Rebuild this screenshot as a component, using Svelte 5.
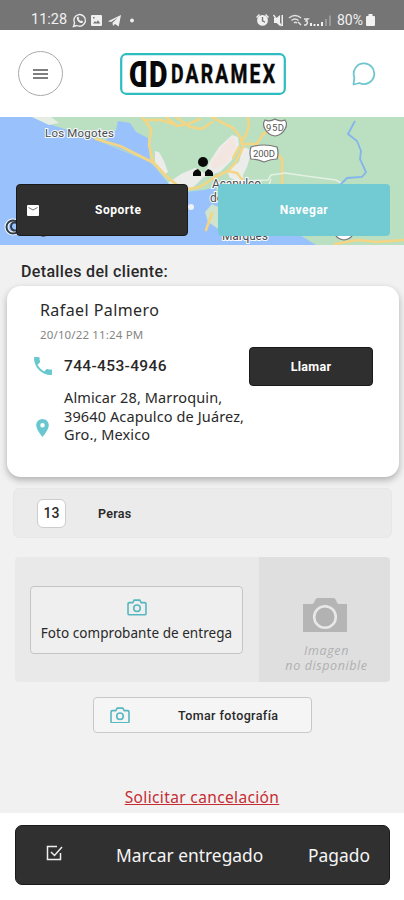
<script lang="ts">
    let customer = {
        name: 'Rafael Palmero',
        date: '20/10/22 11:24 PM',
        phone: '744-453-4946',
        address: ['Almicar 28, Marroquin,', '39640 Acapulco de Juárez,', 'Gro., Mexico'],
    };

    let items = [{ quantity: 13, name: 'Peras' }];
</script>

{#snippet camera(width: number)}
    <svg class="camera" {width} height={width * 0.84} viewBox="0 0 20 17" fill="none" stroke="#55b7bf" stroke-width="1.6">
        <path d="M2.2 3.7h3.5l1.5-2.6h5.6l1.5 2.6h3.5q1.3 0 1.3 1.3v9.6q0 1.4-1.3 1.4H2.2Q.9 16 .9 14.600V5q0-1.300 1.300-1.300z" />
        <circle cx="10" cy="9.300" r="3.300" />
    </svg>
{/snippet}

<div class="screen">
    <div class="status-bar">
        <span class="time">11:28</span>
        <svg width="64" height="18" viewBox="0 0 64 18" fill="#f0f0f0">
            <path d="M1.500 15.500l1-3.400a5.800 5.800 0 1 1 2.400 2.400z" fill="none" stroke="#f0f0f0" stroke-width="1.400" />
            <path d="M5 6.200l1.200-.7 1 1.700-.6 1 2 1.900 1-.5 1.500 1-.6 1.300c-3 .9-6.400-2.900-5.500-5.700z" />
            <path fill-rule="evenodd" d="M20 4h9q1 0 1 1v9q0 1-1 1h-9q-1 0-1-1V5q0-1 1-1zM21 12.500h7.300l-2.400-3.200-1.700 2.100-1.200-1.300zM21 6v1.500h1.500V6z" />
            <path d="M36 10.200L49 4l-2.300 11.500-3.700-2.600-2 2-.5-3.200L46 6.500l-7 4.600z" />
            <circle cx="60" cy="9.500" r="1.900" />
        </svg>
        <svg class="system" width="77" height="18" viewBox="0 0 77 18" fill="#f0f0f0">
            <path d="M1 6l3-3 1 1-3 3zM11 3l3 3-1 1-3-3z" />
            <path fill-rule="evenodd" d="M7.500 4a5.400 5.400 0 1 1 0 10.800A5.400 5.400 0 0 1 7.500 4zM6.800 6v4.200l3 1.600.6-1.100-2.200-1.200V6z" />
            <path d="M19 7h2.500L25 4v11l-3.500-3H19zM26.500 4H28v11h-1.500z" />
            <path d="M18.500 4l8 11" stroke="#f0f0f0" stroke-width="1.300" />
            <g fill="none" stroke="#e2e2e2" stroke-width="1.500">
                <path d="M34 7q6-5 12 0M36.500 9.500q3.500-3 7 0M39 12q1.500-1.500 3 0" />
                <path d="M43 11l3 3M49 8h4l-2 2q3 1 0 4h-2" />
            </g>
            <path d="M55 12h2v3h-2zM58.500 13h2v2h-2zM62 13h2v2h-2zM66 11h2v4h-2z" />
            <path d="M70 8h2v7h-2zM74 4.500h2V15h-2z" fill="#9a9a9a" />
        </svg>
        <span class="battery">80%</span>
        <svg width="9" height="14" viewBox="0 0 9 14" fill="#f2f2f2"><path d="M2.500 1h4v2H8q1 0 1 1v8q0 1-1 1H1q-1 0-1-1V4q0-1 1-1h1.500z" /></svg>
    </div>

    <header>
        <button class="menu" aria-label="Menú">
            <svg width="15" height="12" viewBox="0 0 15 12" stroke="#555" stroke-width="1.500"><path d="M0 2h15M0 6h15M0 10h15" /></svg>
        </button>
        <svg class="logo" width="166" height="42" viewBox="0 0 166 42">
            <rect x="1.200" y="1.200" width="163.600" height="39.600" rx="5" fill="#fff" stroke="#2dbcc0" stroke-width="2.200" />
            <g fill="#080808" stroke="#080808" font-family="Roboto, sans-serif">
                <text transform="translate(27.500 33.500) scale(-1 1)" font-size="36" font-weight="900" stroke="none" textLength="18.500" lengthAdjust="spacingAndGlyphs">D</text>
                <text x="29" y="33.500" font-size="36" font-weight="900" stroke="none" textLength="18.500" lengthAdjust="spacingAndGlyphs">D</text>
                <text class="wordmark" transform="translate(51 30) scale(0.730 1)" font-size="26.500" font-weight="700" stroke-width="0.500">DARAMEX</text>
            </g>
        </svg>
        <button class="chat" aria-label="Chat">
            <svg width="24" height="24" viewBox="0 0 24 24" fill="none" stroke="#6fc6cf" stroke-width="1.800">
                <path d="M1.500 22.500l.9-7A10.300 10.300 0 1 1 7.500 21z" stroke-linejoin="round" />
            </svg>
        </button>
    </header>

    <section class="map">
        <svg class="map-canvas" width="404" height="128" viewBox="0 0 404 128">
            <rect width="404" height="128" fill="#99c2fc" />
            <path d="M32 0l23 9 35 11 14 6 46 19 5 5 14 17 17 8 18-2 12-3 2 18 16 12 78 8 18 20h74V0z" fill="#bbdfc1" />
            <path d="M104 25l12-12 2-9 12 2 6 9 12 6 2 23z" fill="#99c2fc" />
            <path d="M32 0l17 8 10-2-8-6z" fill="#e6eee4" />
            <path d="M155 34l4 1 5 9 4 11-3 2-10-10z" fill="#ececea" />
            <path d="M168 66l13-9 14-6 10 5 5-12 9-14 13-12 6 2 1 8-7 15-12 12-16 5-14 13-14-3z" fill="#ececea" />
            <path d="M243 30l9 3-5 17-4 8 1 9-14-6-3-7 12-9z" fill="#ececea" />
            <path d="M211 46l11-16 11-11 3 12-10 16-14 6z" fill="#f3e6e1" />
            <path d="M196 74l14-1 8 8v20l10 14 88 13H196z" fill="#99c2fc" />
            <path d="M205 95l7-8 8 4v22l-12-8z" fill="#cfe3cd" />
            <path d="M300 118h104v10h-88z" fill="#bbdfc1" />
            <g fill="none" stroke="#f4d583" stroke-width="2.600" stroke-linejoin="round" stroke-linecap="round">
                <path d="M96 22l24 7 34 17 11 12 18 15 17-3 15-10 13-6 8-9 7-15-2-9-8-10-16-8-8-5" />
                <path d="M142 0l9 12-2 16 4 17M146 3h15l12 4M166 0l11 9 11-2 12-5M176 0l14 10 12 2 10-7M248 0l1 8-3 10-5 7M242 27h15l6-10 8-4M228 54l9 2 7 9M239 30l-6 11M272 32l10 10v26M206 113l6-17" />
                <path d="M335 127l22-4 20 2 27-2" />
            </g>
            <path d="M244 64l24-1 3-5 14-2 21 3 30 4 7 4M271 62l-3 9" fill="none" stroke="#e3f1e2" stroke-width="1.500" />
            <path d="M355 4l-7 13 9 7 4 10-1 8 6 13-4 5-15 1-8 8" fill="none" stroke="#83b4ed" stroke-width="1.800" />
            <circle cx="191" cy="90" r="3" fill="#eef1f7" />
            <g font-family="Roboto, sans-serif" fill="#484c50" stroke="#f7f9fa" stroke-width="2.200" paint-order="stroke">
                <text x="45" y="20" font-size="11.500" textLength="69">Los Mogotes</text>
                <text x="212" y="71" font-size="12" textLength="49">Acapulco</text>
                <text x="210" y="85" font-size="12">de</text>
                <text x="222" y="123" font-size="12" textLength="46">Marqués</text>
            </g>
            <g fill="#fff" stroke="#777" stroke-width="1.200">
                <path d="M265 3q5 2 10-1 5 3 10 1 3 4 0 9-3 6-10 7-7-1-10-7-3-5 0-9z" />
                <path d="M251 30q13-4 26 0 2 6 0 12-6 0-13 3-7-3-13-3-2-6 0-12z" />
                <path d="M335 117h18q-2 5-9 6-7-1-9-6z" />
            </g>
            <g font-family="Roboto, sans-serif" font-size="9.500" fill="#555">
                <text x="266" y="14" textLength="18">95D</text>
                <text x="253" y="40" textLength="22">200D</text>
            </g>
            <path d="M39 117q4 5 9 0" fill="#ddd" stroke="#555" />
            <circle cx="13" cy="110" r="6.500" fill="none" stroke="#f7faff" stroke-width="4" />
            <circle cx="13" cy="110" r="6.500" fill="none" stroke="#303c49" stroke-width="2" />
            <path d="M17 106q-6-2-6 4 1 5 7 3" fill="none" stroke="#303c49" stroke-width="2" />
            <g fill="#090909">
                <circle cx="203" cy="45" r="5" />
                <path d="M193 59v-3q1-3 5-4l3 3v4zM205 59v-4l3-3q4 1 5 4v3z" />
            </g>
        </svg>
        <div class="map-actions">
            <button class="support">
                <svg width="12" height="11" viewBox="0 0 12 11"><rect width="12" height="11" rx="1" fill="#fff" /><path d="M1.500 2.500L6 5l4.500-2.500" fill="none" stroke="#777" /></svg>
                <span>Soporte</span>
            </button>
            <button class="navigate">Navegar</button>
        </div>
    </section>

    <main>
        <h2>Detalles del cliente:</h2>

        <section class="card">
            <div class="name">{customer.name}</div>
            <div class="date">{customer.date}</div>
            <div class="phone-row">
                <svg width="18" height="18" viewBox="3 3 18 18" fill="#69c8cf">
                    <path d="M6.600 10.800c1.400 2.800 3.800 5.100 6.600 6.600l2.200-2.200c.3-.3.700-.4 1-.2 1.100.4 2.300.6 3.600.6.600 0 1 .4 1 1V20c0 .6-.4 1-1 1C10.600 21 3 13.400 3 4c0-.6.500-1 1-1h3.500c.600 0 1 .4 1 1 0 1.300.2 2.500.6 3.600.1.300 0 .7-.2 1z" />
                </svg>
                <span class="phone">{customer.phone}</span>
                <button class="call">Llamar</button>
            </div>
            <div class="address-row">
                <svg width="13" height="18" viewBox="5 2 14 20" fill="#69c8cf">
                    <path d="M12 2C8.100 2 5 5.100 5 9c0 5.200 7 13 7 13s7-7.800 7-13c0-3.900-3.100-7-7-7zm0 9.500a2.500 2.500 0 1 1 0-5 2.500 2.500 0 0 1 0 5z" />
                </svg>
                <div class="address">
                    {#each customer.address as line}
                        <div>{line}</div>
                    {/each}
                </div>
            </div>
        </section>

        {#each items as item}
            <div class="item">
                <span class="quantity">{item.quantity}</span>
                <span class="item-name">{item.name}</span>
            </div>
        {/each}

        <section class="proof">
            <div class="proof-left">
                <button class="proof-button">
                    {@render camera(20)}
                    <span>Foto comprobante de entrega</span>
                </button>
            </div>
            <div class="no-image">
                <svg width="44" height="34" viewBox="0 0 44 34">
                    <path d="M0 6h9q2 0 3-4 1-2 3-2h15q2 0 3 2 1 4 3 4h8v28H0z" fill="#b5b5b5" />
                    <circle cx="22" cy="19" r="10.800" fill="#b2b2b2" stroke="#e8e8e8" stroke-width="2.600" />
                </svg>
                <span class="no-image-top">Imagen</span>
                <span class="no-image-bottom">no disponible</span>
            </div>
        </section>

        <button class="take-photo">
            {@render camera(20)}
            <span>Tomar fotografía</span>
        </button>

        <button class="cancel">Solicitar cancelación</button>
    </main>

    <footer>
        <button class="deliver">
            <svg width="17" height="16" viewBox="0 0 17 16" fill="none" stroke="#eee" stroke-width="1.500">
                <path d="M11 1.500H1.500v13h13V8M5 7l3.500 3.500L16 2" />
            </svg>
            <span class="deliver-label">Marcar entregado</span>
            <span class="paid">Pagado</span>
        </button>
    </footer>
</div>

<style>
    :global(body) {
        background: #fff;
    }

    .screen {
        width: 404px;
        height: 900px;
        display: flex;
        flex-direction: column;
        overflow: hidden;
        font-family: "Noto Sans", sans-serif;
        color: #292929;
    }

    button {
        padding: 0;
        border: 0;
        background: none;
        font-family: inherit;
        color: inherit;
        cursor: pointer;
        white-space: nowrap;
    }

    svg {
        display: block;
        flex: none;
    }

    .status-bar {
        box-sizing: border-box;
        height: 30px;
        padding: 9px 29px 0 31px;
        display: flex;
        align-items: center;
        background: #757575;
        color: #f1f1f1;
        font-family: Roboto, sans-serif;
        font-size: 14.5px;
    }

    .time {
        width: 41px;
    }

    .system {
        margin-left: auto;
    }

    .battery {
        width: 28px;
        margin: 0 1px 0 5px;
        font-size: 14px;
    }

    header {
        box-sizing: border-box;
        height: 87px;
        padding: 0 28px 0 18px;
        display: flex;
        align-items: center;
    }

    .menu {
        box-sizing: border-box;
        width: 45px;
        height: 45px;
        display: flex;
        align-items: center;
        justify-content: center;
        border: 1px solid #aaa;
        border-radius: 50%;
    }

    .logo {
        margin-left: 57px;
    }

    .wordmark {
        letter-spacing: 3px;
    }

    .chat {
        margin-left: auto;
    }

    .map {
        position: relative;
        height: 128px;
    }

    .map-actions {
        position: absolute;
        inset: 67px 14px 9px 16px;
        display: flex;
        justify-content: space-between;
    }

    .support,
    .navigate {
        width: 172px;
        border-radius: 4px;
        font: 700 12px Roboto, sans-serif;
        letter-spacing: 0.5px;
        color: #fff;
    }

    .support {
        box-sizing: border-box;
        display: flex;
        align-items: center;
        padding-left: 10px;
        border: 1px solid #1b1b1b;
        background: #2f2f2f;
    }

    .support span {
        margin-left: 56px;
    }

    .navigate {
        background: #72cad3;
    }

    main {
        height: 568px;
        overflow: hidden;
        background: #f1f1f1;
    }

    h2 {
        height: 41px;
        margin: 0 0 0 21px;
        font: 500 16px/53px Roboto, sans-serif;
        letter-spacing: 0.35px;
    }

    .card {
        box-sizing: border-box;
        position: relative;
        width: 392px;
        height: 191px;
        margin-left: 7px;
        padding: 13px 26px 0;
        border-radius: 14px;
        background: #fff;
        box-shadow: 0 3px 7px rgba(0, 0, 0, 0.28);
    }

    .name {
        padding-left: 7px;
        font-size: 16px;
        line-height: 22px;
        letter-spacing: 0.42px;
    }

    .date {
        padding-left: 7px;
        font-size: 11.5px;
        line-height: 28px;
        letter-spacing: 0.15px;
        color: #858585;
    }

    .phone-row {
        height: 38px;
        margin-top: -2px;
        padding-left: 1px;
        display: flex;
        align-items: center;
    }

    .phone {
        margin-left: 12px;
        font: 500 15.5px Roboto, sans-serif;
        letter-spacing: 0.35px;
    }

    .call {
        box-sizing: border-box;
        width: 124px;
        height: 39px;
        margin-left: auto;
        border: 1px solid #1a1a1a;
        border-radius: 4px;
        background: #2f2f2f;
        font: 700 12.5px Roboto, sans-serif;
        letter-spacing: 0.3px;
        color: #fff;
    }

    .address-row {
        display: flex;
        padding: 3px 0 0 3px;
    }

    .address-row svg {
        margin-top: 31px;
    }

    .address {
        margin-left: 15px;
        font-size: 14.5px;
        line-height: 18.5px;
        letter-spacing: 0.12px;
    }

    .item {
        box-sizing: border-box;
        width: 379px;
        height: 50px;
        margin: 11px 0 0 13px;
        padding-left: 23px;
        display: flex;
        align-items: center;
        border-radius: 6px;
        background: #ebebeb;
        border: 1px solid #e7e7e7;
    }

    .quantity {
        box-sizing: border-box;
        width: 29px;
        height: 29px;
        border: 1px solid #ccc;
        border-radius: 6px;
        background: #fff;
        font: 500 14px/27px Roboto, sans-serif;
        text-align: center;
    }

    .item-name {
        margin-left: 32px;
        font: 600 12.5px Roboto, sans-serif;
        letter-spacing: 0.3px;
    }

    .proof {
        display: flex;
        width: 375px;
        height: 125px;
        margin: 19px 0 0 15px;
        border-radius: 4px;
        overflow: hidden;
    }

    .proof-left {
        box-sizing: border-box;
        width: 244px;
        padding: 29px 0 0 15px;
        background: #e9e9e9;
    }

    .proof-button {
        box-sizing: border-box;
        width: 213px;
        height: 68px;
        padding-top: 12px;
        display: flex;
        flex-direction: column;
        align-items: center;
        border: 1px solid #c4c4c4;
        border-radius: 4px;
        background: #efefef;
        font-size: 13.5px;
    }

    .proof-button span {
        margin-top: 8px;
        line-height: 18px;
        letter-spacing: 0.05px;
    }

    .no-image {
        width: 131px;
        padding-top: 41px;
        box-sizing: border-box;
        display: flex;
        flex-direction: column;
        align-items: center;
        background: #dfdfdf;
        color: #b0b0b0;
        font-family: "Open Sans", sans-serif;
        font-size: 12.5px;
        font-style: italic;
        line-height: 15px;
        letter-spacing: 0.6px;
    }

    .no-image-top {
        margin: 11px 0 0 4px;
    }

    .no-image-bottom {
        margin-left: 4px;
    }

    .take-photo {
        box-sizing: border-box;
        width: 219px;
        height: 36px;
        margin: 15px 0 0 93px;
        padding-left: 16px;
        display: flex;
        align-items: center;
        border: 1px solid #c8c8c8;
        border-radius: 4px;
        background: #f5f5f5;
        font: 500 12.5px Roboto, sans-serif;
        letter-spacing: 0.4px;
    }

    .take-photo span {
        margin-left: 48px;
    }

    .cancel {
        display: block;
        margin: 53px auto 0;
        font-size: 15.5px;
        line-height: 22px;
        letter-spacing: 0.36px;
        color: #c62d32;
        text-decoration: underline;
    }

    footer {
        padding: 12px 14px 0 15px;
    }

    .deliver {
        box-sizing: border-box;
        width: 375px;
        height: 60px;
        padding: 0 19px 0 30px;
        display: flex;
        align-items: center;
        border: 1px solid #1a1a1a;
        border-radius: 7px;
        background: #303030;
        color: #f5f5f5;
        font-size: 17.4px;
    }

    .deliver svg {
        margin-top: -4px;
    }

    .deliver-label {
        margin-left: 53px;
    }

    .paid {
        margin-left: auto;
    }
</style>
